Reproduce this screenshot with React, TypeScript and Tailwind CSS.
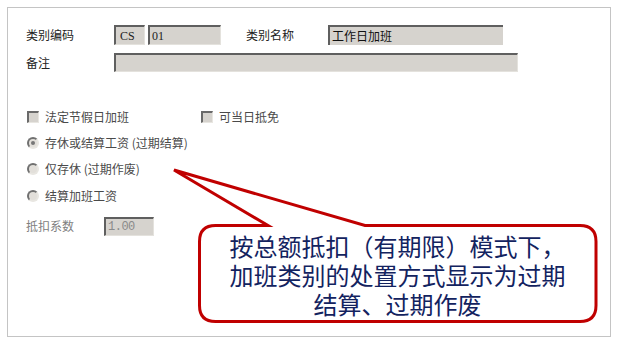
import React from 'react';

const cjk = { fontFamily: '"Noto Sans CJK SC", "Noto Sans", sans-serif' };

const Field: React.FC<{ w: string; children?: React.ReactNode; mono?: boolean }> = ({ w, children, mono }) => (
  <div
    className={`${w} h-full bg-[#d6d3ce] border-t-2 border-l-2 border-t-[#5f5f5f] border-l-[#5f5f5f] border-r border-b border-r-[#e4e2dd] border-b-[#e4e2dd] flex items-center pl-[2px] text-[12px] leading-none`}
    style={mono ? { fontFamily: '"Liberation Mono", monospace' } : { fontFamily: '"Liberation Serif", "Noto Sans CJK SC", serif' }}
  >
    {children}
  </div>
);

const Check: React.FC = () => (
  <span className="w-[12px] h-[12px] bg-[#d6d3ce] border-t-2 border-l-2 border-t-[#6a6a6a] border-l-[#6a6a6a] border-r border-b border-r-[#e8e6e1] border-b-[#e8e6e1]" />
);

const Radio: React.FC<{ checked?: boolean }> = ({ checked }) => (
  <span className="w-[12px] h-[12px] rounded-full bg-[#e2dfda] border-2 border-t-[#707070] border-l-[#707070] border-r-[#e8e6e1] border-b-[#e8e6e1] flex items-center justify-center">
    {checked && <span className="w-[4px] h-[4px] rounded-full bg-[#777777]" />}
  </span>
);

// 居中的全角括号
const Paren: React.FC<{ children: React.ReactNode }> = ({ children }) => (
  <span className="inline-block w-[24px] text-center font-['Noto_Sans_CJK_TC',sans-serif]">{children}</span>
);

export default function App() {
  return (
    <div className="relative w-[618px] h-[344px] bg-white p-[7px]" style={cjk}>
      <div className="w-[604px] h-[330px] border border-[#c4c4c4] pl-[18px] pt-[17px] text-[12px] text-[#222222]">
        {/* 类别编码 / 类别名称 */}
        <div className="flex items-center h-[20px]">
          <div className="w-[88px]">类别编码</div>
          <Field w="w-[31px]"><span className="pl-[2px]">CS</span></Field>
          <div className="w-[3px]" />
          <Field w="w-[73px]">01</Field>
          <div className="w-[25px]" />
          <div className="w-[82px]">类别名称</div>
          <div className="h-full w-[175px] bg-[#d6d3ce] border-t-2 border-l-2 border-t-[#5f5f5f] border-l-[#5f5f5f] flex items-center pl-[2px] text-[12px] text-[#111111]">工作日加班</div>
        </div>

        {/* 备注 */}
        <div className="flex items-center h-[19px] mt-[8px]">
          <div className="w-[88px]">备注</div>
          <Field w="w-[404px]" />
        </div>

        {/* 选项 */}
        <div className="text-[#4a4a4a] pl-[1px]">
          <div className="flex items-center h-[20px] mt-[35px]">
            <div className="w-[174px] flex items-center gap-[6px]">
              <Check />
              <span>法定节假日加班</span>
            </div>
            <div className="flex items-center gap-[6px]">
              <Check />
              <span>可当日抵免</span>
            </div>
          </div>
          <div className="flex items-center h-[20px] mt-[6px] gap-[6px]">
            <Radio checked />
            <span>存休或结算工资 (过期结算)</span>
          </div>
          <div className="flex items-center h-[20px] mt-[6px] gap-[6px]">
            <Radio />
            <span>仅存休 (过期作废)</span>
          </div>
          <div className="flex items-center h-[20px] mt-[7px] gap-[6px]">
            <Radio />
            <span>结算加班工资</span>
          </div>
        </div>

        <div className="flex items-center h-[20px] mt-[10px] text-[#808080]">
          <div className="w-[78px]">抵扣系数</div>
          <div className="w-[50px] h-[19px]">
            <Field w="w-[50px]" mono><span className="text-[#8a8a8a] tracking-[-0.5px]">1.00</span></Field>
          </div>
        </div>
      </div>

      {/* 标注气泡 */}
      <svg className="absolute left-0 top-0" width="618" height="344" viewBox="0 0 618 344">
        <path
          d="M 215.5 225.5 L 268 225.5 L 174 170 L 365 225.5 L 580 225.5 Q 596 225.5 596 241.5 L 596 305.5 Q 596 321.5 580 321.5 L 215.5 321.5 Q 199.5 321.5 199.5 305.5 L 199.5 241.5 Q 199.5 225.5 215.5 225.5 Z"
          fill="#ffffff"
          stroke="#c00000"
          strokeWidth="3"
          strokeLinejoin="miter"
        />
      </svg>
      <div className="absolute left-[199px] top-[226px] w-[397px] h-[96px] flex flex-col items-center justify-center text-[24px] leading-[29px] text-[#13235f] text-center">
        <div className="h-[29px]">按总额抵扣<Paren>（</Paren>有期限<Paren>）</Paren>模式下，</div>
        <div className="h-[29px]">加班类别的处置方式显示为过期</div>
        <div className="h-[29px]">结算、过期作废</div>
      </div>
    </div>
  );
}
